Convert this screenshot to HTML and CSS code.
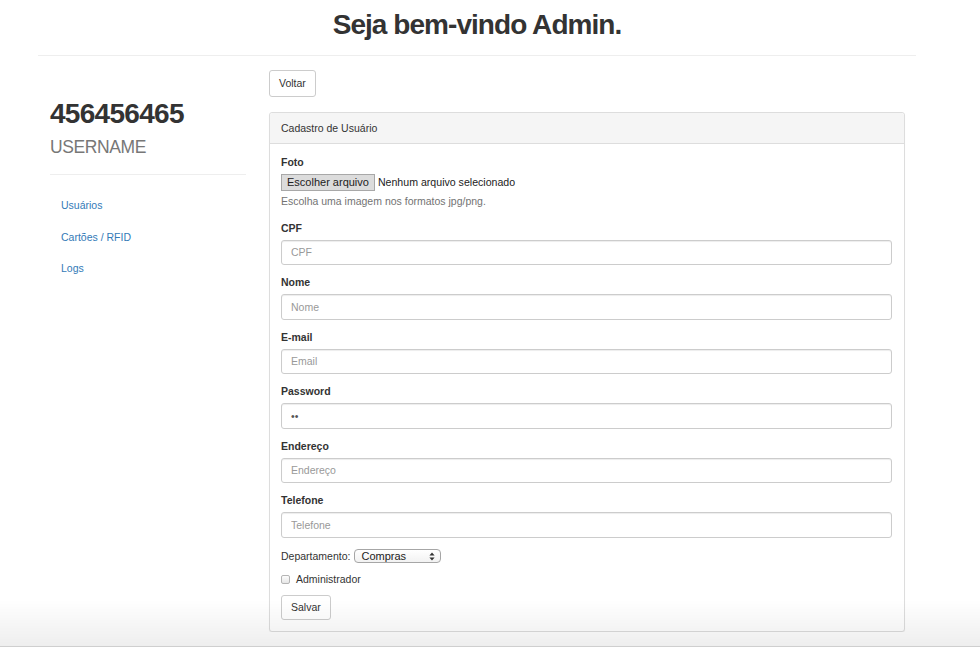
FILE: index.html
```html
<!DOCTYPE html>
<html lang="pt-BR">
<head>
<meta charset="utf-8">
<title>Cadastro de Usuário</title>
<link rel="stylesheet" href="styles.css">
</head>
<body>
<div class="page">
  <header class="top">
    <h1 class="welcome">Seja bem-vindo Admin.</h1>
  </header>
  <hr class="top-rule">
  <div class="row">
    <aside class="sidebar">
      <h1 class="user-id">456456465<small class="user-name">USERNAME</small></h1>
      <hr class="side-rule">
      <ul class="nav">
        <li><a href="#">Usuários</a></li>
        <li><a href="#">Cartões / RFID</a></li>
        <li><a href="#">Logs</a></li>
      </ul>
    </aside>
    <main class="main">
      <button class="btn" type="button">Voltar</button>
      <section class="panel">
        <div class="panel-heading">Cadastro de Usuário</div>
        <div class="panel-body">
          <div class="group group-file">
            <label class="lbl">Foto</label>
            <div class="file-row"><span class="file-btn">Escolher arquivo</span><span class="file-name">Nenhum arquivo selecionado</span></div>
            <p class="help">Escolha uma imagem nos formatos jpg/png.</p>
          </div>
          <div class="group">
            <label class="lbl">CPF</label>
            <input class="field" type="text" placeholder="CPF">
          </div>
          <div class="group">
            <label class="lbl">Nome</label>
            <input class="field" type="text" placeholder="Nome">
          </div>
          <div class="group">
            <label class="lbl">E-mail</label>
            <input class="field" type="text" placeholder="Email">
          </div>
          <div class="group">
            <label class="lbl">Password</label>
            <input class="field" type="password" value="ab">
          </div>
          <div class="group">
            <label class="lbl">Endereço</label>
            <input class="field" type="text" placeholder="Endereço">
          </div>
          <div class="group">
            <label class="lbl">Telefone</label>
            <input class="field" type="text" placeholder="Telefone">
          </div>
          <div class="dept-row">
            <span class="dept-label">Departamento:</span>
            <span class="select">
              <span class="select-text">Compras</span>
              <svg class="select-arrows" width="6" height="9" viewBox="0 0 6 9"><path d="M3 0.5 L5.6 3.6 H0.4 Z M3 8.5 L5.6 5.4 H0.4 Z" fill="#333"/></svg>
            </span>
          </div>
          <div class="check-row">
            <span class="checkbox"></span>
            <span class="check-label">Administrador</span>
          </div>
          <button class="btn btn-save" type="button">Salvar</button>
        </div>
      </section>
    </main>
  </div>
</div>
<div class="screen-shade"></div>
</body>
</html>
```
FILE: styles.css
```css
html, body {
  margin: 0;
  padding: 0;
  background: #fff;
}
body {
  font-family: "Liberation Sans", Arial, sans-serif;
  font-size: 10.5px;
  line-height: 15px;
  color: #333;
}
.page {
  width: 878px;
  margin-left: 38px;
}
.top {
  text-align: center;
}
.welcome {
  margin: 9px 0 0;
  font-size: 28px;
  line-height: 31px;
  font-weight: bold;
  letter-spacing: -0.95px;
  color: #333;
}
.top-rule {
  margin: 15px 0 0;
  border: 0;
  border-top: 1px solid #eee;
  height: 0;
}
.row {
  display: flex;
  margin-top: 14px;
}
.sidebar {
  width: 196px;
  padding: 0 11px 0 12px;
  flex: none;
}
.user-id {
  margin: 28px 0 0;
  font-size: 28px;
  line-height: 31px;
  font-weight: bold;
  letter-spacing: -0.7px;
  color: #333;
}
.user-name {
  display: block;
  margin-top: 7px;
  font-size: 17.5px;
  line-height: 22px;
  font-weight: normal;
  letter-spacing: -0.4px;
  color: #777;
}
.side-rule {
  margin: 16px 0 15px;
  border: 0;
  border-top: 1px solid #eee;
  height: 0;
}
.nav {
  list-style: none;
  margin: 0;
  padding: 0;
}
.nav li a {
  display: block;
  padding: 8px 11px;
  line-height: 15.5px;
  color: #337ab7;
  text-decoration: none;
}
.main {
  flex: 1;
  padding: 0 11px 0 12px;
  min-width: 0;
}
.btn {
  display: inline-block;
  font-family: inherit;
  font-size: 10.5px;
  line-height: 15px;
  color: #333;
  background: #fff;
  border: 1px solid #ccc;
  border-radius: 3px;
  padding: 5px 9px;
  height: 27px;
  margin: 0;
}
.panel {
  margin-top: 15px;
  border: 1px solid #ddd;
  border-radius: 3px;
  box-shadow: 0 1px 1px rgba(0,0,0,.05);
  background: #fff;
}
.panel-heading {
  background: #f5f5f5;
  border-bottom: 1px solid #ddd;
  padding: 8px 11px 7px;
  line-height: 15px;
  border-radius: 3px 3px 0 0;
}
.panel-body {
  padding: 11px 12px 11px 11px;
}
.group {
  margin-bottom: 10px;
}
.group-file {
  margin-bottom: 12px;
}
.lbl {
  display: block;
  font-weight: bold;
  line-height: 15px;
  margin-bottom: 4px;
}
.file-row {
  display: flex;
  align-items: center;
  height: 17px;
  font-size: 11px;
}
.file-btn {
  display: inline-block;
  height: 15px;
  line-height: 15px;
  padding: 0 5px;
  background: #dcdcdc;
  border: 1px solid #a8a8a8;
  color: #222;
}
.file-name {
  margin-left: 3px;
  font-size: 10.6px;
  color: #222;
}
.help {
  margin: 2.5px 0 0;
  color: #737373;
  line-height: 15px;
}
.field {
  display: block;
  width: 100%;
  box-sizing: border-box;
  height: 25.5px;
  padding: 0 9px;
  font-family: inherit;
  font-size: 10.5px;
  color: #555;
  border: 1px solid #ccc;
  border-radius: 3px;
  box-shadow: inset 0 1px 1px rgba(0,0,0,.075);
  outline: none;
}
.field::placeholder {
  color: #999;
}
.dept-row {
  display: flex;
  align-items: center;
  height: 17px;
}
.dept-label {
  margin-right: 4px;
}
.select {
  display: inline-flex;
  align-items: center;
  justify-content: space-between;
  box-sizing: border-box;
  width: 87px;
  height: 14px;
  padding: 0 5px 0 6px;
  border: 1px solid #a6a6a6;
  border-radius: 4px;
  background: linear-gradient(#fff, #f2f2f2);
  font-size: 11px;
  color: #222;
}
.select-text {
  line-height: 12px;
}
.check-row {
  display: flex;
  align-items: center;
  height: 15px;
  margin-top: 7px;
}
.checkbox {
  display: inline-block;
  width: 7px;
  height: 7px;
  border: 1px solid #b5b5b5;
  border-radius: 2px;
  background: linear-gradient(#fdfdfd, #e6e6e6);
  margin-right: 6px;
}
.btn-save {
  margin-top: 8.5px;
  height: 25px;
  padding: 4px 9px;
}
.screen-shade {
  position: fixed;
  left: 0;
  right: 0;
  bottom: 0;
  height: 47px;
  pointer-events: none;
  background: linear-gradient(rgba(0,0,0,0), rgba(0,0,0,0.065));
  border-bottom: 1px solid #cfcfcf;
  box-sizing: border-box;
}
```
